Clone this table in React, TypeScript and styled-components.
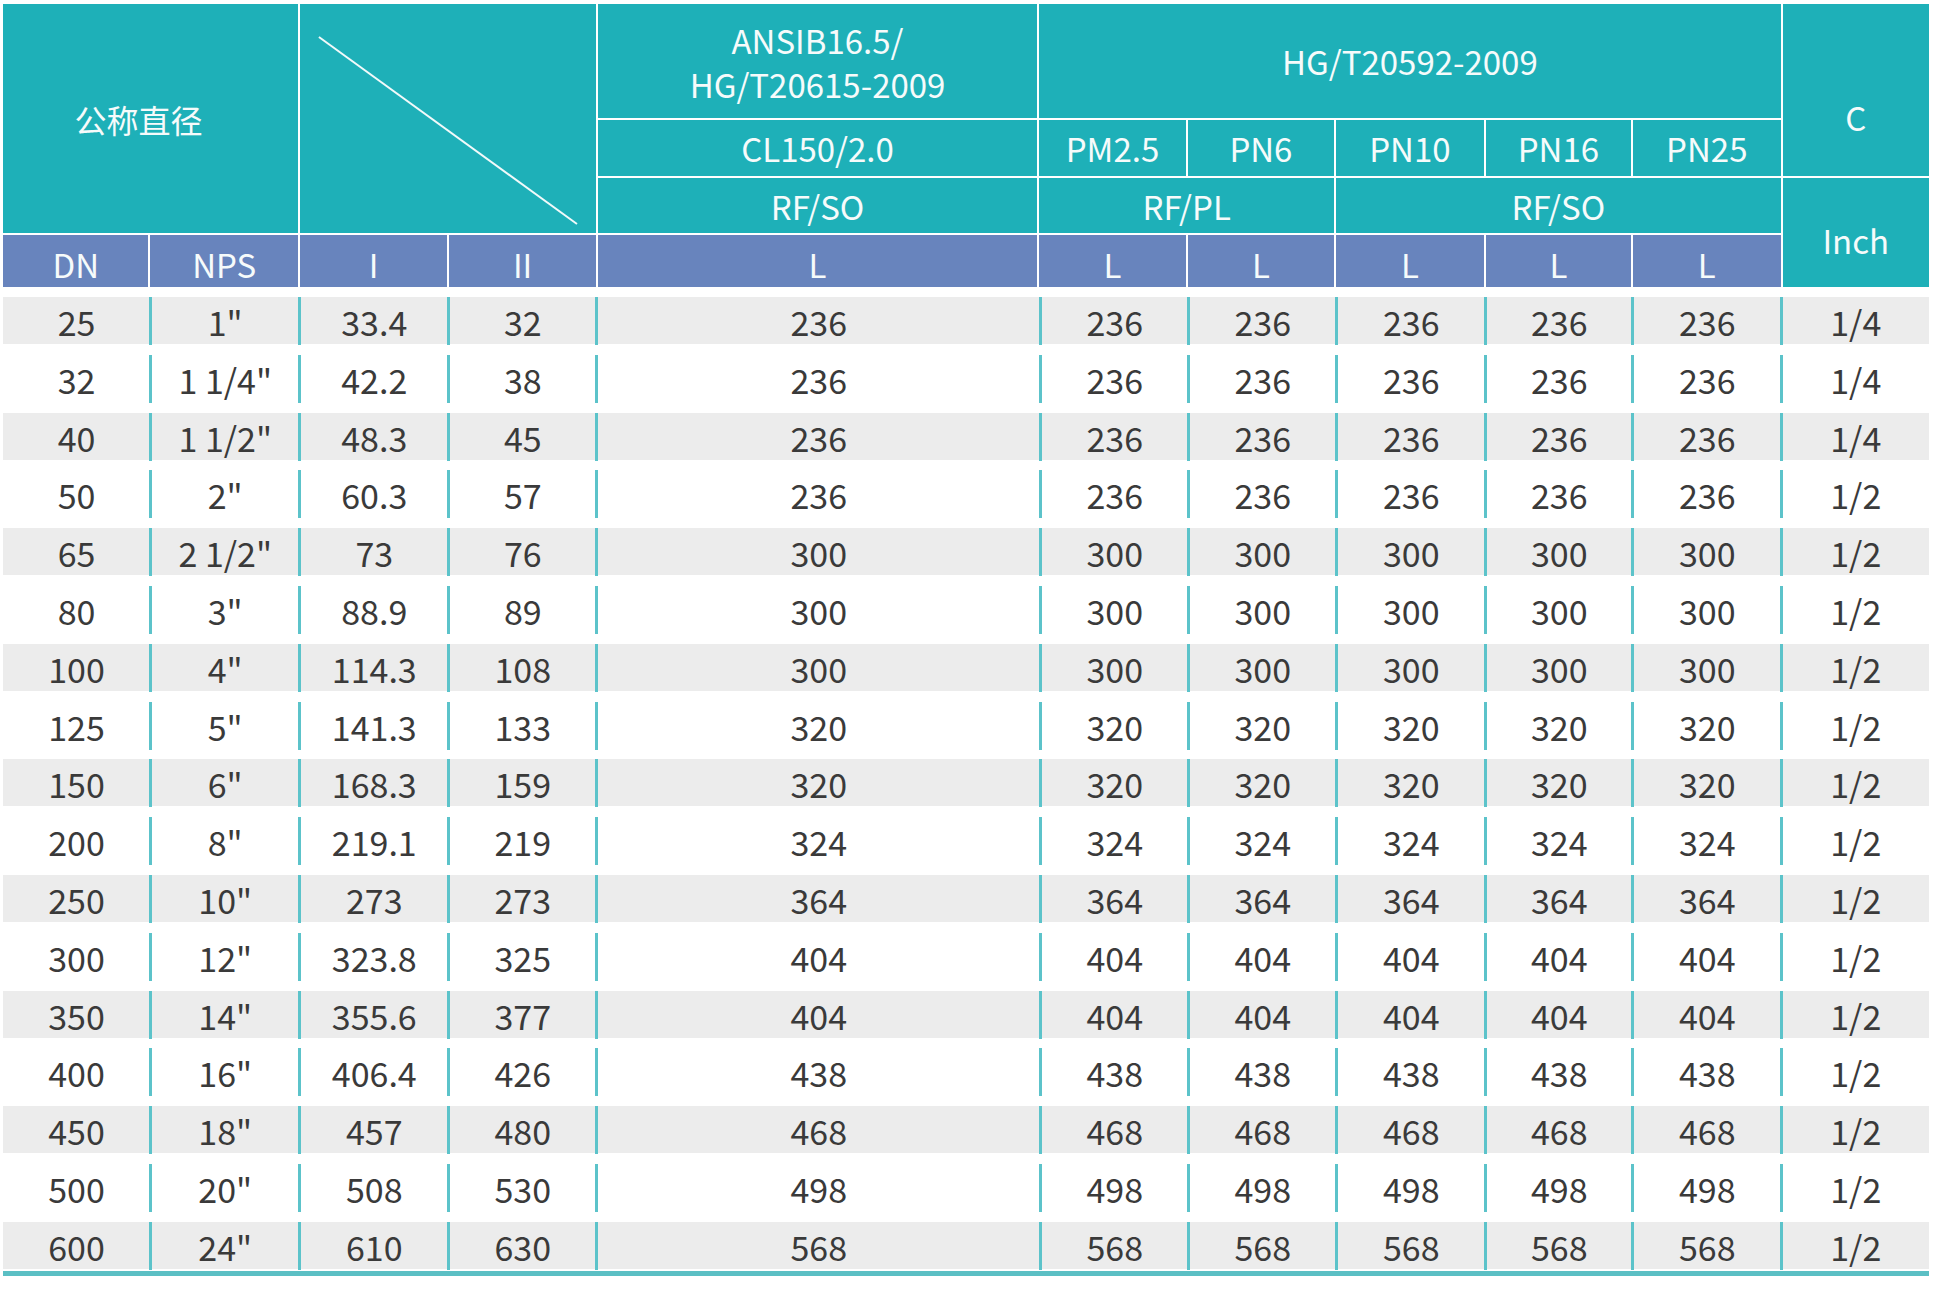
import React from "react";
import styled, { createGlobalStyle } from "styled-components";

const TEAL = "#1eb0b8";
const BLUE = "#6884bd";
const SEP = "#5cc3ca";
const STRIPE = "#ececec";
const INK = "#3a3a3a";
const FONT = `"Noto Sans CJK SC", "Noto Sans", sans-serif`;

const COLS = "147fr 149fr 149fr 148fr 444fr 148fr 148fr 149fr 147fr 149fr 148fr";

const Global = createGlobalStyle`
  html, body { margin: 0; padding: 0; background: #ffffff; }
  body { font-family: ${FONT}; }
`;

const Page = styled.div`
  padding: 4px 0 0 3px;
  width: 1926px;
`;

const Header = styled.div`
  display: grid;
  grid-template-columns: ${COLS};
  grid-template-rows: 114px 56px 55px 52px;
  gap: 2px;
  background: #ffffff;
`;

const HCell = styled.div<{ $c: string; $r: string; $blue?: boolean; $pt?: number; $pr?: number }>`
  grid-column: ${(p) => p.$c};
  grid-row: ${(p) => p.$r};
  background: ${(p) => (p.$blue ? BLUE : TEAL)};
  color: #f6fbfb;
  font-family: ${FONT};
  font-size: 33px;
  font-weight: 400;
  line-height: 44px;
  display: flex;
  flex-direction: column;
  align-items: center;
  justify-content: center;
  text-align: center;
  padding-top: ${(p) => p.$pt ?? 0}px;
  padding-right: ${(p) => p.$pr ?? 0}px;
  box-sizing: border-box;
  white-space: nowrap;
`;

const Cjk = styled.span`
  font-size: 32px;
`;

const DiagCell = styled.div`
  grid-column: 3 / 5;
  grid-row: 1 / 4;
  background: ${TEAL};
`;

const DiagSvg = styled.svg`
  display: block;
  width: 100%;
  height: 100%;
`;

const Body = styled.div`
  display: flex;
  flex-direction: column;
  gap: 10.8px;
  margin-top: 10px;
`;

const Row = styled.div<{ $striped: boolean }>`
  display: grid;
  grid-template-columns: ${COLS};
  height: 47px;
  background: ${(p) => (p.$striped ? STRIPE : "#ffffff")};
`;

const Cell = styled.div<{ $sep: boolean }>`
  display: flex;
  align-items: center;
  justify-content: center;
  border-left: ${(p) => (p.$sep ? `3px solid ${SEP}` : "none")};
  margin-left: ${(p) => (p.$sep ? "-1.5px" : "0")};
  color: ${INK};
  font-family: ${FONT};
  font-size: 34px;
  line-height: 47px;
  padding-top: 1px;
  white-space: nowrap;
`;

const BottomRule = styled.div`
  height: 5px;
  margin-top: 2px;
  background: #5bbfc4;
`;

type R = [number, string, string, number, number, string];

const rows: R[] = [
  [25, '1"', "33.4", 32, 236, "1/4"],
  [32, '1 1/4"', "42.2", 38, 236, "1/4"],
  [40, '1 1/2"', "48.3", 45, 236, "1/4"],
  [50, '2"', "60.3", 57, 236, "1/2"],
  [65, '2 1/2"', "73", 76, 300, "1/2"],
  [80, '3"', "88.9", 89, 300, "1/2"],
  [100, '4"', "114.3", 108, 300, "1/2"],
  [125, '5"', "141.3", 133, 320, "1/2"],
  [150, '6"', "168.3", 159, 320, "1/2"],
  [200, '8"', "219.1", 219, 324, "1/2"],
  [250, '10"', "273", 273, 364, "1/2"],
  [300, '12"', "323.8", 325, 404, "1/2"],
  [350, '14"', "355.6", 377, 404, "1/2"],
  [400, '16"', "406.4", 426, 438, "1/2"],
  [450, '18"', "457", 480, 468, "1/2"],
  [500, '20"', "508", 530, 498, "1/2"],
  [600, '24"', "610", 630, 568, "1/2"],
];

export default function App() {
  return (
    <>
      <Global />
      <Page>
        <Header>
          <HCell $c="1 / 3" $r="1 / 4" $pr={24}>
            <Cjk>公称直径</Cjk>
          </HCell>
          <DiagCell>
            <DiagSvg viewBox="0 0 297 229" preserveAspectRatio="none">
              <line x1="19" y1="33" x2="278" y2="220" stroke="#f2fafa" strokeWidth="2" />
            </DiagSvg>
          </DiagCell>
          <HCell $c="5" $r="1" $pt={2}>
            <span>ANSIB16.5/</span>
            <span>HG/T20615-2009</span>
          </HCell>
          <HCell $c="6 / 11" $r="1">HG/T20592-2009</HCell>
          <HCell $c="11" $r="1 / 3" $pt={54}>C</HCell>
          <HCell $c="5" $r="2">CL150/2.0</HCell>
          <HCell $c="6" $r="2">PM2.5</HCell>
          <HCell $c="7" $r="2">PN6</HCell>
          <HCell $c="8" $r="2">PN10</HCell>
          <HCell $c="9" $r="2">PN16</HCell>
          <HCell $c="10" $r="2">PN25</HCell>
          <HCell $c="5" $r="3">RF/SO</HCell>
          <HCell $c="6 / 8" $r="3">RF/PL</HCell>
          <HCell $c="8 / 11" $r="3">RF/SO</HCell>
          <HCell $c="11" $r="3 / 5" $pt={15}>Inch</HCell>
          {["DN", "NPS", "I", "II", "L", "L", "L", "L", "L", "L"].map((t, i) => (
            <HCell key={i} $c={String(i + 1)} $r="4" $blue $pt={5}>
              {t}
            </HCell>
          ))}
        </Header>
        <Body>
          {rows.map((r, i) => {
            const cells = [
              String(r[0]),
              r[1],
              r[2],
              String(r[3]),
              String(r[4]),
              String(r[4]),
              String(r[4]),
              String(r[4]),
              String(r[4]),
              String(r[4]),
              r[5],
            ];
            return (
              <Row key={i} $striped={i % 2 === 0}>
                {cells.map((c, j) => (
                  <Cell key={j} $sep={j > 0}>
                    {c}
                  </Cell>
                ))}
              </Row>
            );
          })}
        </Body>
        <BottomRule />
      </Page>
    </>
  );
}
